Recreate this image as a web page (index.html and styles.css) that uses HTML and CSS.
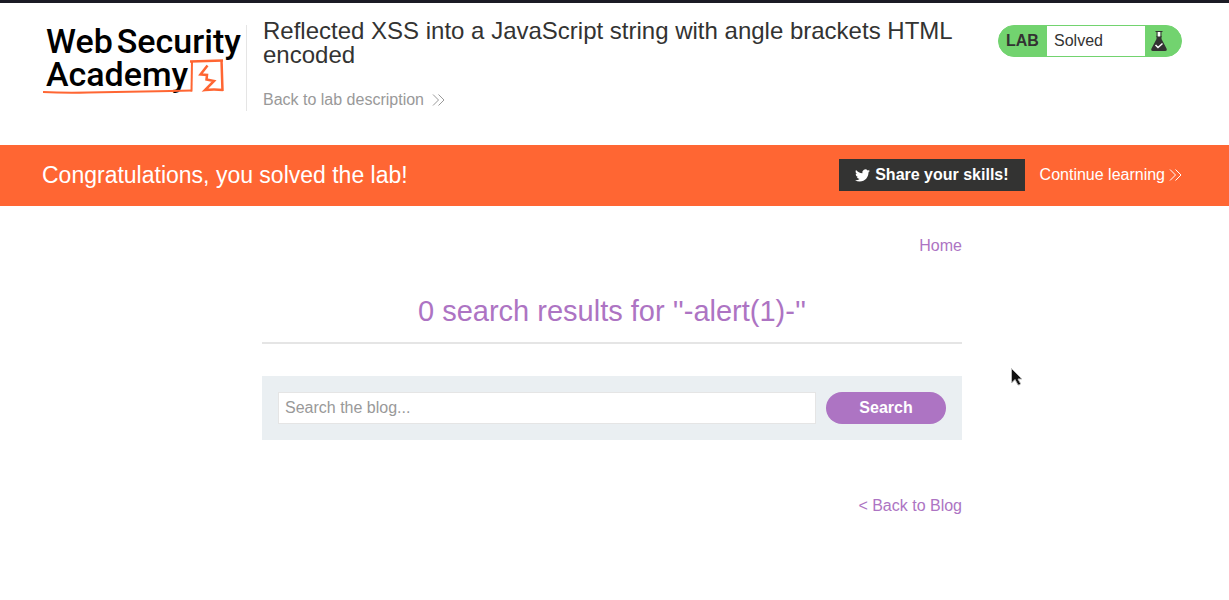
FILE: index.html
```html
<!DOCTYPE html>
<html lang="en">
<head>
<meta charset="utf-8">
<meta name="viewport" content="width=device-width, initial-scale=1">
<title>Reflected XSS into a JavaScript string with angle brackets HTML encoded</title>
<link rel="stylesheet" href="styles.css">
</head>
<body>
<header class="lab-header">
  <a class="logo" href="#" aria-label="Web Security Academy">
    <span class="logo-line"><span>Web</span><span>Security</span></span>
    <span class="logo-line">Academy</span>
    <svg class="logo-mark" viewBox="0 0 184 37" fill="none" stroke="#ff6633" aria-hidden="true">
      <path d="M0 33Q20 34 45 33.500T100 32.500T149 31.500" stroke-width="2"/>
      <path d="M148.500 32.500L149 2.500" stroke-width="2"/>
      <path d="M147 2.500L180 1.500" stroke-width="2.500"/>
      <path d="M178.500 1L179.500 32" stroke-width="2.500"/>
      <path d="M180 31Q171 30 162 31L171 22L163.500 20.500L164 16L157.500 15.500L164.500 6.500" stroke-width="2.500"/>
    </svg>
  </a>
  <div class="lab-title">
    <h1>Reflected XSS into a JavaScript string with angle brackets HTML encoded</h1>
    <a class="arrow-link muted" href="#">Back to lab description
      <svg class="chevrons" viewBox="0 0 13 12" aria-hidden="true"><path d="M1 0.500L6.500 6L1 11.500M6.500 0.500L12 6L6.500 11.500"/></svg></a>
  </div>
  <div class="lab-status">
    <span class="lab-tag">LAB</span>
    <span class="lab-state">Solved</span>
    <svg class="flask" viewBox="0 0 16 20" aria-hidden="true">
      <path d="M5.500 5H10.500V8L15.500 17.500Q16.500 20 14 20H2Q-0.500 20 0.500 17.500L5.500 8Z" fill="#333332"/>
      <path d="M6.500 1H9.500V5.500H6.500Z" fill="#fff"/>
      <path d="M4.500 0.500H11.500M6 1V6M10 1V6" stroke="#333332" fill="none"/>
      <path d="M4.500 14L7 16.500L11.500 12.500" stroke="#fff" stroke-width="1.500" fill="none"/>
    </svg>
  </div>
</header>
<section class="banner">
  <h2>Congratulations, you solved the lab!</h2>
  <a class="share" href="#">
    <svg class="bird" viewBox="0 0 24 24" fill="#fff" aria-hidden="true"><path d="M23.950 4.570a10 10 0 0 1-2.820.770 4.960 4.960 0 0 0 2.160-2.720c-.950.550-2 .950-3.130 1.180a4.920 4.920 0 0 0-8.380 4.480C7.690 8.100 4.070 6.130 1.640 3.160a4.820 4.820 0 0 0-.670 2.480c0 1.710.870 3.210 2.190 4.100a4.900 4.900 0 0 1-2.230-.620v.060a4.920 4.920 0 0 0 3.950 4.830 5 5 0 0 1-2.210.080 4.940 4.940 0 0 0 4.600 3.420A9.870 9.870 0 0 1 0 19.540a13.990 13.990 0 0 0 7.550 2.210c9.050 0 14-7.500 14-13.980 0-.210 0-.420-.020-.630a9.940 9.940 0 0 0 2.460-2.550z"/></svg>
    Share your skills!</a>
  <a class="arrow-link light" href="#">Continue learning
    <svg class="chevrons" viewBox="0 0 13 12" aria-hidden="true"><path d="M1 0.500L6.500 6L1 11.500M6.500 0.500L12 6L6.500 11.500"/></svg></a>
</section>
<main class="page">
  <div class="blog">
    <nav class="blog-nav"><a href="#">Home</a></nav>
    <h2 class="results">0 search results for ''-alert(1)-''</h2>
    <form class="search">
      <input type="text" placeholder="Search the blog..." aria-label="Search the blog">
      <button type="button">Search</button>
    </form>
    <div class="blog-back"><a href="#">&lt; Back to Blog</a></div>
  </div>
</main>
<svg class="pointer" viewBox="0 0 14 20" aria-hidden="true"><path d="M1.500 1.500V16L5 12.500L8 18Q10 18.500 10.500 16.500L8 12H12Z" fill="#111" stroke="#bbb"/></svg>
</body>
</html>
```
FILE: styles.css
```css
* {
  box-sizing: border-box;
}

body {
  margin: 0;
  border-top: 3px solid #1b1b25;
  background: #fff;
  color: #333332;
  font: 16px/20px "Liberation Sans", Arial, sans-serif;
}

h1, h2 {
  margin: 0;
  font-weight: 400;
}

a {
  text-decoration: none;
}

.lab-header {
  display: flex;
  align-items: flex-start;
  padding: 22px 47px 33px 42px;
}

.logo {
  position: relative;
  flex: none;
  width: 205px;
  height: 86px;
  padding-left: 4px;
  border-right: 1px solid #e5e5e5;
  color: #000;
  font: 500 34px/33px Roboto, sans-serif;
}

.logo-line {
  display: flex;
  gap: 4px;
}

.logo-mark {
  position: absolute;
  top: 34px;
  left: 1px;
  width: 184px;
  height: 37px;
}

.lab-title {
  flex: 1;
  padding: 0 32px 0 16px;
}

.lab-title h1 {
  margin: -6px 0 22px;
  font-size: 24px;
  line-height: 24px;
}

.arrow-link {
  display: inline-flex;
  align-items: center;
}

.muted {
  gap: 8px;
  padding-top: 1px;
  color: #999;
}

.light {
  gap: 4px;
  margin-left: 15px;
  color: #fff;
}

.chevrons {
  width: 13px;
  height: 12px;
  fill: none;
  stroke: currentColor;
}

.lab-status {
  display: flex;
  flex: none;
  align-items: center;
  width: 184px;
  height: 32px;
  border: 1px solid #72d36f;
  border-radius: 16px;
  background: #72d36f;
}

.lab-tag {
  width: 48px;
  padding-left: 7px;
  font-weight: 700;
}

.lab-state {
  width: 98px;
  padding-left: 7px;
  background: #fff;
  line-height: 30px;
}

.flask {
  width: 16px;
  height: 20px;
  margin-left: 6px;
}

.banner {
  display: flex;
  align-items: center;
  margin-top: 1px;
  padding: 14px 47px 15px 42px;
  background: #ff6633;
  color: #fff;
}

.banner h2 {
  flex: 1;
  font-size: 23px;
  line-height: 32px;
}

.share {
  display: flex;
  align-items: center;
  gap: 5px;
  padding: 6px 16px;
  background: #333332;
  color: #fff;
  font-weight: 700;
}

.bird {
  width: 15px;
  height: 15px;
}

.page {
  padding: 30px 5px 0 0;
}

.blog {
  max-width: 700px;
  margin: 0 auto;
}

.blog a {
  color: #ad74c3;
}

.blog-nav, .blog-back {
  text-align: right;
}

.results {
  margin: 36px 0 32px;
  padding-bottom: 12px;
  border-bottom: 2px solid #e5e5e5;
  color: #ad74c3;
  font-size: 29px;
  line-height: 38px;
  text-align: center;
}

.search {
  display: flex;
  gap: 10px;
  margin-bottom: 56px;
  padding: 16px;
  background: #eaeff2;
}

.search input {
  flex: 1;
  min-width: 0;
  height: 32px;
  padding: 0 6px;
  border: 1px solid #e5e5e5;
  background: #fff;
  color: #333332;
  font: inherit;
}

.search input::placeholder {
  color: #999;
}

.search button {
  width: 120px;
  height: 32px;
  border: 0;
  border-radius: 16px;
  background: #ad74c3;
  color: #fff;
  font: inherit;
  font-weight: 700;
}

.pointer {
  position: absolute;
  top: 367px;
  left: 1010px;
  width: 14px;
  height: 20px;
}
```
